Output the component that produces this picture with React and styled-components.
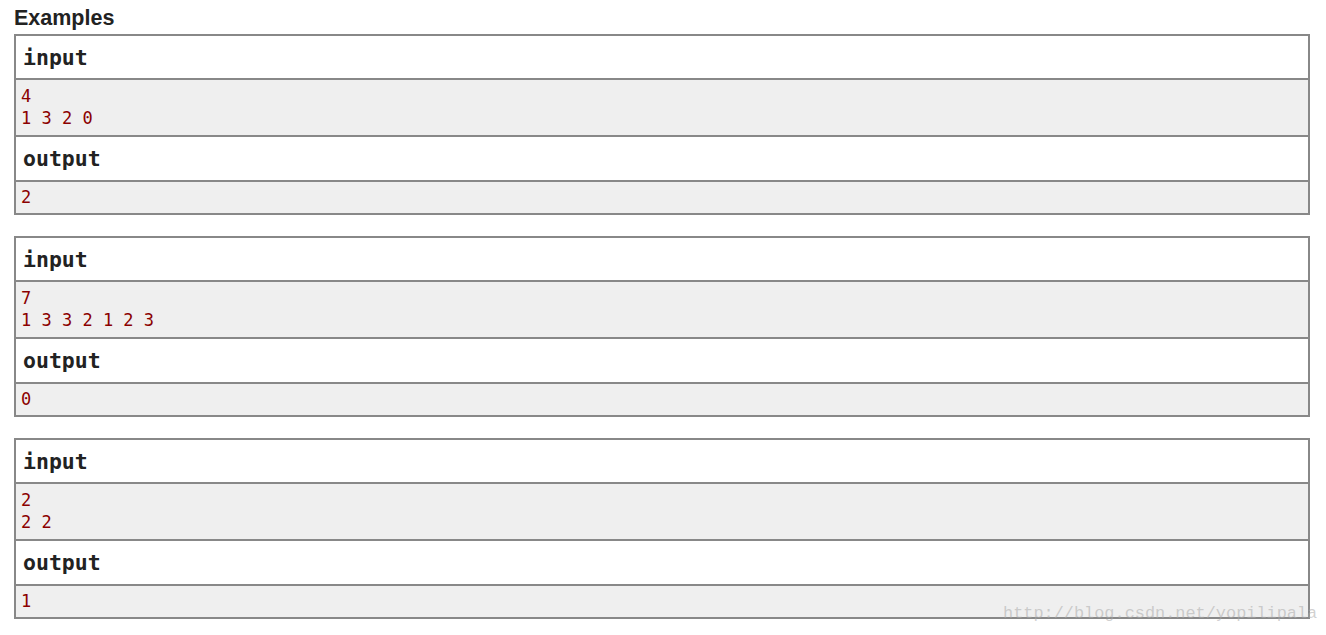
import React from 'react'
import styled, { createGlobalStyle } from 'styled-components'

const GlobalStyle = createGlobalStyle`
  html, body {
    margin: 0;
    padding: 0;
    background: #fff;
  }
`

const Page = styled.div`
  position: relative;
  width: 1326px;
  height: 635px;
  padding: 4px 0 0 14px;
  box-sizing: border-box;
  overflow: hidden;
`

const Title = styled.div`
  font-family: 'Liberation Sans', Arial, sans-serif;
  font-weight: bold;
  font-size: 21.5px;
  line-height: 28px;
  color: #222;
  height: 30px;
`

const List = styled.div`
  display: flex;
  flex-direction: column;
  gap: 21px;
  width: 1296px;
`

const Sample = styled.div`
  border: 2px solid #888;
  display: flex;
  flex-direction: column;
`

const Head = styled.div`
  height: ${(p) => p.$h}px;
  display: flex;
  align-items: center;
  padding-left: 7px;
  background: #fff;
  font-family: 'DejaVu Sans Mono', Consolas, monospace;
  font-weight: bold;
  font-size: 21.5px;
  color: #222;
  border-top: ${(p) => (p.$first ? 'none' : '2px solid #888')};
`

const Body = styled.pre`
  margin: 0;
  background: #efefef;
  border-top: 2px solid #888;
  padding: ${(p) => p.$pt}px 5px ${(p) => p.$pb}px;
  font-family: 'DejaVu Sans Mono', Consolas, monospace;
  font-size: 17px;
  line-height: 22px;
  color: #8b0000;
`

const Watermark = styled.div`
  position: absolute;
  left: 1003px;
  top: 602px;
  font-family: 'Liberation Mono', 'Courier New', monospace;
  font-size: 16.9px;
  line-height: 24px;
  color: rgba(170, 170, 170, 0.55);
  white-space: nowrap;
`

const samples = [
  { input: '4\n1 3 2 0', output: '2' },
  { input: '7\n1 3 3 2 1 2 3', output: '0' },
  { input: '2\n2 2', output: '1' },
]

export default function App() {
  return (
    <Page>
      <GlobalStyle />
      <Title>Examples</Title>
      <List>
        {samples.map((s, i) => (
          <Sample key={i}>
            <Head $first $h={42}>input</Head>
            <Body $pt={5} $pb={6}>{s.input}</Body>
            <Head $h={43}>output</Head>
            <Body $pt={4} $pb={5}>{s.output}</Body>
          </Sample>
        ))}
      </List>
      <Watermark>http://blog.csdn.net/yopilipala</Watermark>
    </Page>
  )
}
